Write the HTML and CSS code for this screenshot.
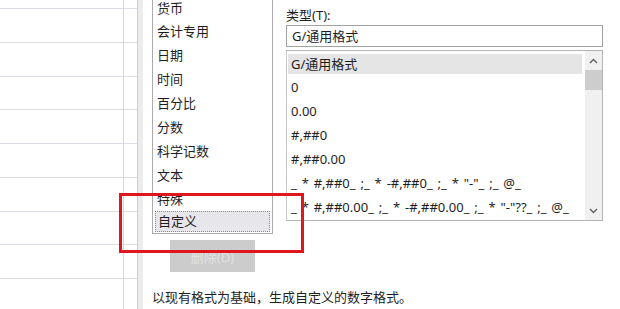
FILE: index.html
```html
<!DOCTYPE html>
<html lang="zh-CN">
<head>
  <meta charset="UTF-8" />
  <meta name="viewport" content="width=device-width, initial-scale=1.0"/>
  <title>设置单元格格式 - 自定义</title>
  <link rel="stylesheet" href="styles.css">
</head>
<body>
  <div class="screen">
    <div class="sheet">
      <div class="sheet-row first"><div class="cell"></div><div class="cell"></div></div>
      <div class="sheet-row"><div class="cell"></div><div class="cell"></div></div>
      <div class="sheet-row"><div class="cell"></div><div class="cell"></div></div>
      <div class="sheet-row"><div class="cell"></div><div class="cell"></div></div>
      <div class="sheet-row"><div class="cell"></div><div class="cell"></div></div>
      <div class="sheet-row"><div class="cell"></div><div class="cell"></div></div>
      <div class="sheet-row"><div class="cell"></div><div class="cell"></div></div>
      <div class="sheet-row"><div class="cell"></div><div class="cell"></div></div>
      <div class="sheet-row"><div class="cell"></div><div class="cell"></div></div>
      <div class="sheet-row"><div class="cell"></div><div class="cell"></div></div>
    </div>

    <div class="edge"></div>

    <div class="dialog">
      <div class="panes">
        <div class="category">
          <ul class="cat-list">
            <li>货币</li>
            <li>会计专用</li>
            <li>日期</li>
            <li>时间</li>
            <li>百分比</li>
            <li>分数</li>
            <li>科学记数</li>
            <li>文本</li>
            <li>特殊</li>
            <li class="selected">自定义</li>
          </ul>
          <button class="btn-delete" disabled>删除(D)</button>
        </div>

        <div class="type-pane">
          <label class="type-label">类型(T):</label>
          <div class="type-input">G/通用格式</div>
          <div class="format-box">
            <ul class="format-list">
              <li class="active">G/通用格式</li>
              <li>0</li>
              <li>0.00</li>
              <li>#,##0</li>
              <li>#,##0.00</li>
              <li>_ * #,##0_ ;_ * -#,##0_ ;_ * "-"_ ;_ @_</li>
              <li>_ * #,##0.00_ ;_ * -#,##0.00_ ;_ * "-"??_ ;_ @_</li>
            </ul>
            <div class="scrollbar">
              <div class="arrow">
                <svg width="9" height="6" viewBox="0 0 9 6"><polyline points="1,5 4.5,1.5 8,5" fill="none" stroke="#5f5f5f" stroke-width="1.4"/></svg>
              </div>
              <div class="thumb"></div>
              <div class="track"></div>
              <div class="arrow">
                <svg width="9" height="6" viewBox="0 0 9 6"><polyline points="1,1 4.5,4.5 8,1" fill="none" stroke="#5f5f5f" stroke-width="1.4"/></svg>
              </div>
            </div>
          </div>
        </div>
      </div>

      <p class="hint">以现有格式为基础，生成自定义的数字格式。</p>
    </div>

    <!-- red annotation frame -->
    <div class="callout"></div>
  </div>
</body>
</html>
```

FILE: styles.css
```css
* { box-sizing: border-box; }

body {
  margin: 0;
  font-family: 'Noto Sans', 'Noto Sans CJK SC', sans-serif;
  font-size: 13px;
  color: #1e1e1e;
  background: white;
  overflow: hidden;
}

.screen {
  position: relative;
  display: flex;
  width: 620px;
  height: 309px;
  overflow: hidden;
}

/* spreadsheet behind the dialog */
.sheet {
  width: 137px;
  flex-shrink: 0;
}

.sheet-row {
  display: flex;
  height: 33.75px;
  border-bottom: 1px solid #dcdce4;
}

.sheet-row.first {
  height: 9px;
}

.cell {
  flex: 1;
}

.cell:first-child {
  flex: 0 0 124px;
  border-right: 1px solid #d6d6de;
}

.edge {
  width: 6px;
  flex-shrink: 0;
  background: #ececec;
  border-left: 1px solid #cdcdcd;
}

/* dialog */
.dialog {
  flex: 1;
  padding-left: 9px;
}

.panes {
  display: flex;
  gap: 13px;
  margin-top: -5px;
}

.category {
  width: 121px;
  flex-shrink: 0;
}

.cat-list {
  list-style: none;
  margin: 0;
  padding: 0 2px 1px;
  border: 1px solid #ababab;
  border-top: none;
}

.cat-list li {
  height: 24px;
  line-height: 24px;
  padding-left: 2px;
  white-space: nowrap;
}

.cat-list li:first-child {
  line-height: 26px;
}

.cat-list li.selected {
  height: 21px;
  line-height: 19px;
  background: #e7e7eb;
  border: 1px dotted #8a8a8a;
}

.btn-delete {
  display: block;
  margin: 6px 0 0 18px;
  width: 85px;
  height: 32px;
  padding: 0;
  border: none;
  background: #cccccc;
  color: #e2e2e2;
  font-family: inherit;
  font-size: 13px;
}

.type-pane {
  width: 317px;
  padding-top: 11px;
}

.type-label {
  display: block;
  height: 18px;
  line-height: 18px;
}

.type-input {
  margin-top: 1px;
  height: 22px;
  line-height: 20px;
  padding-left: 5px;
  border: 1px solid #a2a2a2;
}

.format-box {
  display: flex;
  margin-top: 3px;
  height: 171px;
  border: 1px solid #b4b4b4;
  border-left-color: #c8c8c8;
}

.format-list {
  flex: 1;
  list-style: none;
  margin: 0;
  padding: 3px 3px 0 1px;
  overflow: hidden;
  word-spacing: 1.5px;
}

.format-list li {
  height: 24px;
  line-height: 24px;
  padding-left: 3px;
  white-space: nowrap;
}

.format-list li.active {
  height: 20px;
  line-height: 20px;
  margin-bottom: 1px;
  background: #e5e5e5;
}

.scrollbar {
  width: 17px;
  display: flex;
  flex-direction: column;
  background: #f0f0f0;
}

.scrollbar .arrow {
  height: 19px;
  display: flex;
  align-items: center;
  justify-content: center;
}

.scrollbar .thumb {
  height: 20px;
  background: #cdcdcd;
}

.scrollbar .track {
  flex: 1;
}

.hint {
  margin: 16px 0 0;
  line-height: 18px;
}

.callout {
  position: absolute;
  left: 119px;
  top: 193px;
  width: 185px;
  height: 60px;
  border: 3px solid #e0161d;
}
```
